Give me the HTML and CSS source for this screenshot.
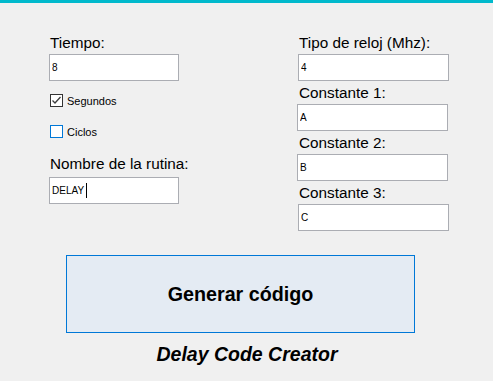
FILE: index.html
```html
<!DOCTYPE html>
<html lang="es">
<head>
    <meta charset="UTF-8">
    <meta name="viewport" content="width=device-width, initial-scale=1.0">
    <title>Delay Code Creator</title>
    <link rel="stylesheet" href="styles.css">
</head>
<body>
    <div class="topbar"></div>

    <div id="content">
        <div class="columns">
            <!-- Left column -->
            <div class="col col-left">
                <label class="field-label" for="tiempo">Tiempo:</label>
                <input class="field" id="tiempo" type="text" value="8">

                <label class="check check-first">
                    <span class="box checked">
                        <svg width="11" height="11" viewBox="0 0 11 11">
                            <polyline points="1.5,5.5 4,8 9.5,2" fill="none" stroke="#3c3c3c" stroke-width="1.3" />
                        </svg>
                    </span>
                    Segundos
                </label>
                <label class="check check-second">
                    <span class="box hover"></span>
                    Ciclos
                </label>

                <label class="field-label label-rutina" for="rutina">Nombre de la rutina:</label>
                <div class="field-wrap">
                    <input class="field field-rutina" id="rutina" type="text" value="DELAY">
                    <span class="caret"></span>
                </div>
            </div>

            <!-- Right column -->
            <div class="col col-right">
                <label class="field-label" for="reloj">Tipo de reloj (Mhz):</label>
                <input class="field wide" id="reloj" type="text" value="4">

                <label class="field-label spaced" for="c1">Constante 1:</label>
                <input class="field wide shift" id="c1" type="text" value="A">

                <label class="field-label spaced" for="c2">Constante 2:</label>
                <input class="field wide shift" id="c2" type="text" value="B">

                <label class="field-label spaced" for="c3">Constante 3:</label>
                <input class="field wide" id="c3" type="text" value="C">
            </div>
        </div>

        <button class="generate" type="button">Generar código</button>
        <div class="app-title">Delay Code Creator</div>
    </div>
</body>
</html>
```

FILE: styles.css
```css
/* Reset some default styles */
body, input, button {
    margin: 0;
    padding: 0;
    font-family: 'Liberation Sans', Arial, sans-serif;
}

body {
    background: #f0f0f0;
    color: #000;
    width: 493px;
    height: 381px;
    overflow: hidden;
}

.topbar {
    height: 3px;
    background: #00b9cc;
}

#content {
    padding-top: 31px;
}

.columns {
    display: flex;
}

.col {
    display: flex;
    flex-direction: column;
    align-items: flex-start;
}

.col-left {
    margin-left: 49px;
    width: 249px;
}

.field-label {
    font-size: 15.3px;
    line-height: 18px;
    height: 18px;
    margin-left: 1px;
    margin-bottom: 2px;
}

.field-label.spaced {
    margin-top: 3px;
}

.field {
    box-sizing: border-box;
    width: 130px;
    height: 27px;
    border: 1px solid #abadb3;
    background: #fff;
    font-size: 10px;
    padding: 0 2px;
    color: #000;
    outline: none;
}

.field.wide {
    width: 151px;
}

.field.shift {
    margin-left: -1px;
}

/* Checkboxes */
.check {
    display: flex;
    align-items: center;
    font-size: 11px;
    height: 13px;
    margin-left: 1px;
}

.check-first {
    margin-top: 13px;
}

.check-second {
    margin-top: 18px;
}

.box {
    box-sizing: border-box;
    width: 13px;
    height: 13px;
    border: 1px solid #333;
    background: #fff;
    margin-right: 4px;
    display: flex;
    align-items: center;
    justify-content: center;
}

.box.hover {
    border-color: #0078d7;
}

.label-rutina {
    margin-top: 17px;
    margin-bottom: 4px;
}

.field-wrap {
    position: relative;
}

.caret {
    position: absolute;
    left: 37px;
    top: 6px;
    width: 1px;
    height: 15px;
    background: #000;
}

/* Button */
.generate {
    display: block;
    box-sizing: border-box;
    margin: 24px 0 0 66px;
    width: 349px;
    height: 78px;
    background: #e4ebf3;
    border: 1px solid #0078d7;
    font-size: 19.7px;
    font-weight: bold;
    color: #000;
    cursor: pointer;
}

.app-title {
    margin-top: 10px;
    text-align: center;
    padding-left: 1px;
    font-size: 19.5px;
    line-height: 23px;
    font-weight: bold;
    font-style: italic;
}
```
